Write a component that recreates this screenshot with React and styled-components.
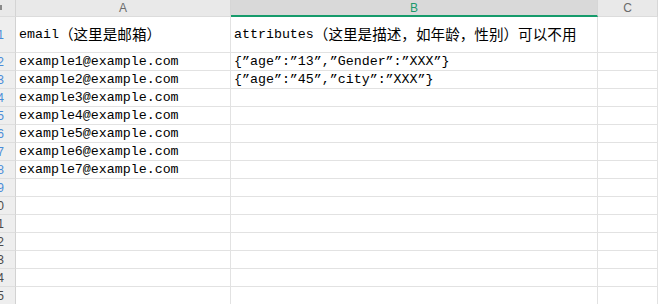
import styled, { createGlobalStyle } from "styled-components";

const Global = createGlobalStyle`
  html, body {
    margin: 0;
    padding: 0;
    background: #ffffff;
    overflow: hidden;
  }
`;

const emails = [
  "example1@example.com",
  "example2@example.com",
  "example3@example.com",
  "example4@example.com",
  "example5@example.com",
  "example6@example.com",
  "example7@example.com",
];

const attrs = [
  '{"age":"13","Gender":"XXX"}',
  '{"age":"45","city":"XXX"}',
];

function Sheet() {
  const rows = [];
  for (let r = 2; r <= 15; r++) {
    rows.push(
      <Row key={r}>
        <RowHead $hl={r <= 9}><span>{r}</span></RowHead>
        <Cell>{emails[r - 2] || ""}</Cell>
        <Cell>{(attrs[r - 2] || "").replace(/"/g, "\u201D")}</Cell>
        <Cell />
      </Row>
    );
  }

  return (
    <Grid>
      <Row $h={17}>
        <Corner><Mark /></Corner>
        <ColHead>A</ColHead>
        <ColHead $active>B</ColHead>
        <ColHead>C</ColHead>
      </Row>
      <Row $h={36}>
        <RowHead $hl><span>1</span></RowHead>
        <Cell>email<Han>（这里是邮箱）</Han></Cell>
        <Cell>attributes<Han>（这里是描述，如年龄，性别）可以不用</Han></Cell>
        <Cell />
      </Row>
      {rows}
    </Grid>
  );
}

export default function App() {
  return (
    <>
      <Global />
      <Sheet />
    </>
  );
}

const Grid = styled.div`
  width: 658px;
  height: 304px;
  overflow: hidden;
  display: flex;
  flex-direction: column;
`;

const Row = styled.div`
  display: grid;
  grid-template-columns: 16px 215px 367px 1fr;
  height: ${(p) => p.$h || 18}px;
  flex: none;
`;

const Corner = styled.div`
  position: relative;
  background: #e9e9e9;
  border-right: 1px solid #d4d4d4;
  border-bottom: 1px solid #dcdcdc;
`;

const Mark = styled.div`
  position: absolute;
  left: 0;
  top: 5px;
  width: 2px;
  height: 5px;
  background: #8a8a8a;
`;

const ColHead = styled.div`
  display: flex;
  align-items: center;
  justify-content: center;
  font-family: "Liberation Sans", Arial, sans-serif;
  font-size: 12px;
  color: ${(p) => (p.$active ? "#1b9a6c" : "#6b6b6b")};
  background: ${(p) => (p.$active ? "#d9d9d9" : "#e9e9e9")};
  border-right: 1px solid #d6d6d6;
  border-bottom: ${(p) => (p.$active ? "2px solid #169b6b" : "1px solid #dcdcdc")};
  box-sizing: border-box;
  padding-top: ${(p) => (p.$active ? "1px" : "0")};
`;

const RowHead = styled.div`
  background: #eeeeee;
  border-right: 1px solid #d2d2d2;
  border-bottom: 1px solid #dedede;
  overflow: hidden;
  display: flex;
  align-items: center;
  justify-content: flex-end;
  font-family: "Liberation Sans", Arial, sans-serif;
  font-size: 12px;
  color: ${(p) => (p.$hl ? "#4a8cd8" : "#4a4a4a")};

  span {
    margin-right: 11px;
  }
`;

const Cell = styled.div`
  display: flex;
  align-items: center;
  padding-left: 3px;
  white-space: nowrap;
  overflow: hidden;
  font-family: "Liberation Mono", "Noto Sans CJK SC", monospace;
  font-size: 13.3px;
  color: #000;
  border-right: 1px solid #e2e2e2;
  border-bottom: 1px solid #e2e2e2;
`;

const Han = styled.span`
  font-family: "Noto Sans CJK SC", sans-serif;
  font-size: 14.6px;
  line-height: 1;
`;
